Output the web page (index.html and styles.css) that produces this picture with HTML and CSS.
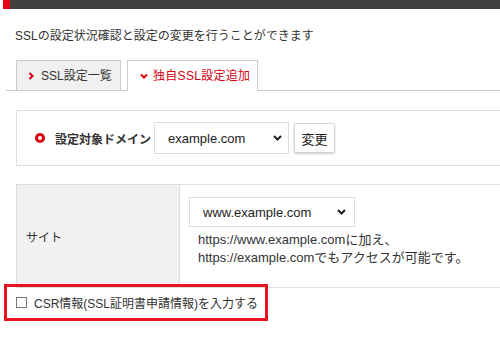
FILE: index.html
```html
<!DOCTYPE html>
<html lang="ja">

<head>
    <meta charset="UTF-8">
    <meta name="viewport" content="width=device-width, initial-scale=1.0">
    <title>SSL設定</title>
    <link rel="stylesheet" href="styles.css">
</head>

<body>
    <div class="topbar"></div>
    <div class="content">
        <p class="lead">SSLの設定状況確認と設定の変更を行うことができます</p>

        <div class="tabs">
            <div class="tab tab-list">
                <svg class="chev" width="6" height="8" viewBox="0 0 6 8"><polyline points="1.5,1 4.5,4 1.5,7" fill="none" stroke="#d7000f" stroke-width="2"/></svg>
                <span>SSL設定一覧</span>
            </div>
            <div class="tab tab-add active">
                <svg class="chev" width="8" height="6" viewBox="0 0 8 6"><polyline points="1,1.5 4,4.5 7,1.5" fill="none" stroke="#d7000f" stroke-width="2"/></svg>
                <span>独自SSL設定追加</span>
            </div>
        </div>

        <div class="domain-box">
            <span class="ring"></span>
            <span class="domain-label">設定対象ドメイン</span>
            <div class="select select-domain">
                <span>example.com</span>
                <svg width="9" height="6" viewBox="0 0 9 6"><polyline points="1,1 4.5,4.5 8,1" fill="none" stroke="#222" stroke-width="2"/></svg>
            </div>
            <button class="btn">変更</button>
        </div>

        <table class="form-table">
            <tr>
                <th>サイト</th>
                <td>
                    <div class="select select-site">
                        <span>www.example.com</span>
                        <svg width="9" height="6" viewBox="0 0 9 6"><polyline points="1,1 4.5,4.5 8,1" fill="none" stroke="#222" stroke-width="2"/></svg>
                    </div>
                    <p class="note">https://www.example.comに加え、<br>https://example.comでもアクセスが可能です。</p>
                </td>
            </tr>
        </table>

        <label class="csr-row">
            <span class="checkbox"></span>
            <span>CSR情報(SSL証明書申請情報)を入力する</span>
        </label>
    </div>
</body>

</html>
```

FILE: styles.css
```css
body {
    margin: 0;
    font-family: "Liberation Sans", "Noto Sans CJK JP", sans-serif;
    color: #333;
    background-color: #fff;
    overflow: hidden;
}

.topbar {
    height: 9px;
    margin-left: 3px;
    background-color: #3f3f3f;
    border-left: 7px solid #e60012;
}

.content {
    padding-left: 6px;
}

.lead {
    margin: 18px 0 0;
    padding-left: 9px;
    font-size: 12px;
    line-height: 18px;
}

.tabs {
    display: flex;
    gap: 6px;
    margin-top: 15px;
    padding-left: 10px;
    height: 30px;
    border-bottom: 1px solid #ccc;
}

.tab {
    box-sizing: border-box;
    height: 31px;
    display: flex;
    align-items: center;
    gap: 7px;
    font-size: 12px;
    line-height: 16px;
    border: 1px solid #ccc;
}

.tab-list {
    width: 105px;
    padding-left: 11px;
    background-color: #f0f0f0;
}

.tab-add {
    width: 131px;
    padding-left: 12px;
    gap: 5px;
    background-color: #fff;
    border-bottom: none;
    color: #d7000f;
    letter-spacing: 0.3px;
}

.domain-box {
    box-sizing: border-box;
    display: flex;
    align-items: center;
    height: 56px;
    margin: 19px 0 0 10px;
    padding-left: 18px;
    border: 1px solid #ddd;
    border-right: none;
}

.ring {
    box-sizing: border-box;
    width: 10px;
    height: 10px;
    border: 3px solid #d7000f;
    border-radius: 50%;
    margin-right: 10px;
}

.domain-label {
    font-size: 12px;
    font-weight: bold;
    margin-right: 3px;
}

.select {
    box-sizing: border-box;
    display: flex;
    align-items: center;
    justify-content: space-between;
    border: 1px solid #ddd;
    background-color: #fff;
    font-size: 13px;
    color: #222;
}

.select-domain {
    width: 135px;
    height: 32px;
    padding: 0 6px 0 13px;
}

.btn {
    box-sizing: border-box;
    width: 41px;
    height: 30px;
    margin-left: 5px;
    padding: 0;
    border: 1px solid #d4d4d4;
    border-radius: 2px;
    background-color: #fff;
    box-shadow: 0 1px 2px rgba(0, 0, 0, 0.2);
    font-family: inherit;
    font-size: 13px;
    color: #222;
}

.form-table {
    margin: 18px 0 0 10px;
    width: calc(100% - 10px);
    border-collapse: collapse;
}

.form-table th,
.form-table td {
    border: 1px solid #ddd;
}

.form-table td {
    border-right: none;
}

.form-table th {
    width: 153px;
    padding: 0 0 0 9px;
    background-color: #f1f1f1;
    text-align: left;
    font-weight: normal;
    font-size: 12px;
}

.form-table td {
    padding: 12px 10px 20px 9px;
    vertical-align: top;
}

.select-site {
    width: 166px;
    height: 30px;
    padding: 0 8px 0 13px;
}

.note {
    margin: 4px 0 0;
    padding-left: 9px;
    font-size: 13px;
    line-height: 18px;
}

.csr-row {
    box-sizing: border-box;
    position: relative;
    display: flex;
    align-items: center;
    gap: 7px;
    width: 264px;
    height: 37px;
    margin: -4px 0 0 -2px;
    padding-left: 9px;
    border: 3px solid #e8141e;
    font-size: 12px;
}

.checkbox {
    box-sizing: border-box;
    width: 11px;
    height: 11px;
    border: 1px solid #777;
    background-color: #fff;
}
```
